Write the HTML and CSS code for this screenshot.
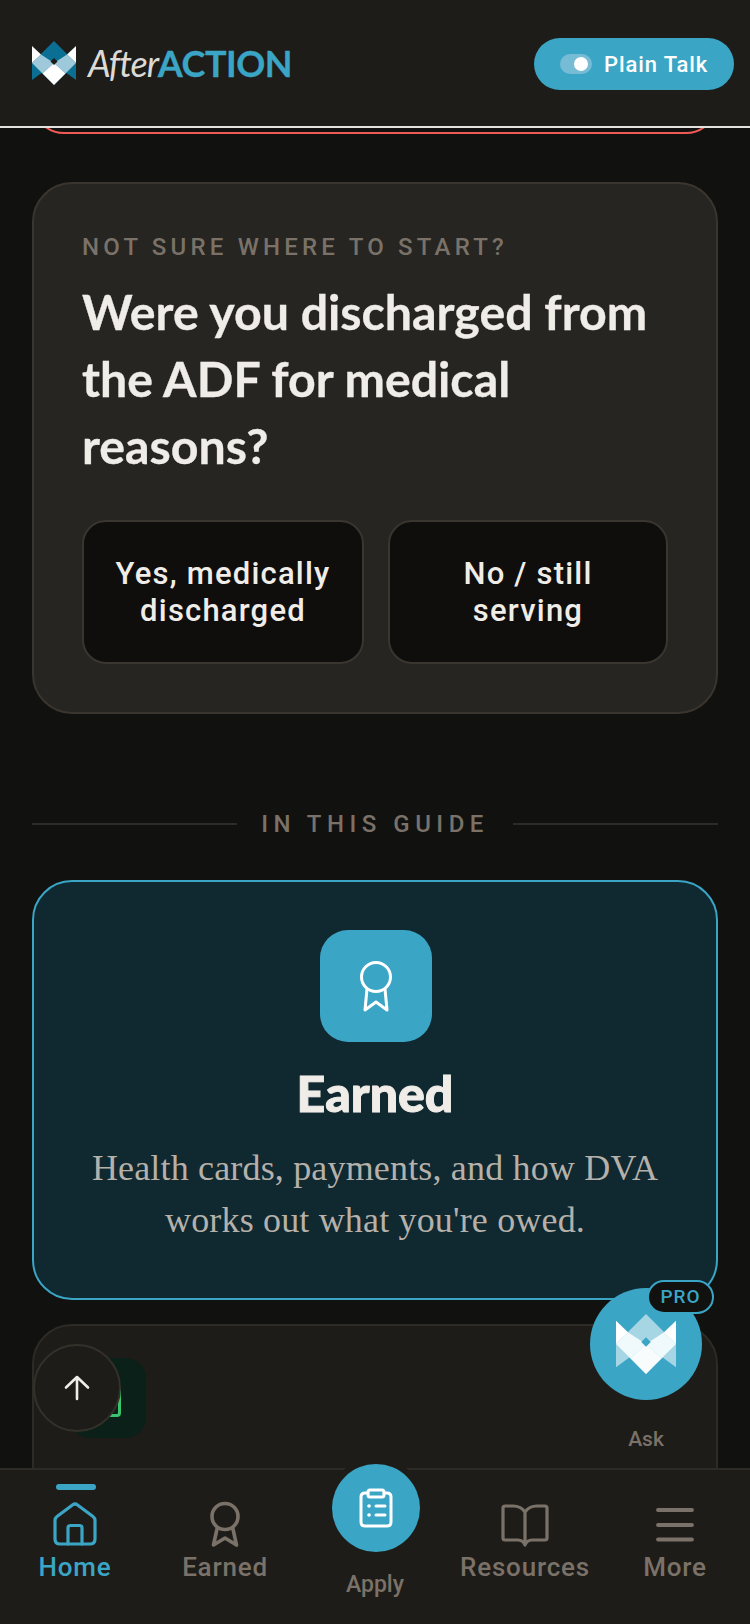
FILE: index.html
```html
<!DOCTYPE html>
<html lang="en">
<head>
<meta charset="utf-8">
<title>AfterAction</title>
<link rel="stylesheet" href="styles.css">
</head>
<body>
<div class="page">
  <header class="topbar">
    <div class="brand">
      <svg class="logo logo-header" viewBox="0 0 44 44" width="44" height="44">
        <polygon class="l-top" points="22,0 44,22 22,44 0,22"/>
        <polygon class="l-side" points="0,22 0,39 11,31"/>
        <polygon class="l-side" points="44,22 44,39 33,31"/>
        <polygon class="l-wedge" points="0,5 9,13.5 0,22"/>
        <polygon class="l-wedge" points="44,5 35,13.5 44,22"/>
        <polygon class="l-band" points="9,13.5 0,22 10.5,32.5 22,22"/>
        <polygon class="l-band" points="35,13.5 44,22 33.500,32.500 22,22"/>
        <polygon class="l-low" points="10.5,32.500 22,22 33.500,32.500 22,44"/>
        <polygon class="l-notch" points="22,17 25.500,20.500 22,24 18.500,20.500"/>
      </svg>
      <span class="wordmark"><span class="wm-after">After</span><span class="wm-action">ACTION</span></span>
    </div>
    <div class="plain-toggle">
      <span class="switch"><span class="knob"></span></span>
      <span class="plain-label">Plain Talk</span>
    </div>
  </header>
  <div class="header-line"></div>

  <main class="content">
    <div class="alert-card"></div>

    <section class="question-card">
      <p class="eyebrow">NOT SURE WHERE TO START?</p>
      <h2 class="question">Were you discharged from the ADF for medical reasons?</h2>
      <div class="answers">
        <button class="answer">Yes, medically discharged</button>
        <button class="answer">No / still serving</button>
      </div>
    </section>

    <div class="divider">
      <span class="divider-rule"></span>
      <span class="divider-text">IN THIS GUIDE</span>
      <span class="divider-rule"></span>
    </div>

    <section class="guide-card">
      <div class="guide-icon">
        <svg viewBox="0 0 36 52" width="36" height="52" fill="none" stroke="#fff" stroke-width="3" stroke-linecap="round" stroke-linejoin="round">
          <circle cx="18" cy="17" r="14.500"/>
          <path d="M9 29 L7 50 L18 42 L29 50 L27 29"/>
        </svg>
      </div>
      <h3 class="guide-title">Earned</h3>
      <p class="guide-text">Health cards, payments, and how DVA works out what you're owed.</p>
    </section>

    <section class="next-card">
      <div class="next-icon">
        <span class="next-glyph"></span>
      </div>
    </section>
  </main>

  <nav class="tabbar">
    <a class="tab tab-active">
      <span class="tab-marker"></span>
      <svg class="tab-svg" viewBox="0 0 44 44" fill="none" stroke="currentColor" stroke-width="3.200" stroke-linecap="round" stroke-linejoin="round">
        <path d="M19.800 2.800 Q22 1.200 24.200 2.800 L40 14.500 Q42 16 42 18.500 V37 Q42 42 37 42 H7 Q2 42 2 37 V18.500 Q2 16 4 14.500 Z"/>
        <path d="M15 42 V26 Q15 23.500 17.500 23.500 H26.500 Q29 23.500 29 26 V42"/>
      </svg>
      <span class="tab-label">Home</span>
    </a>
    <a class="tab">
      <svg class="tab-svg" viewBox="0 0 44 44" fill="none" stroke="currentColor" stroke-width="3.600" stroke-linecap="round" stroke-linejoin="round">
        <circle cx="22" cy="14.500" r="13"/>
        <path d="M14 27 L10.500 43 L22 36 L33.500 43 L30 27"/>
      </svg>
      <span class="tab-label">Earned</span>
    </a>
    <a class="tab tab-apply">
      <span class="apply-circle">
        <svg viewBox="0 0 34 40" width="34" height="40" fill="none" stroke="#fff" stroke-width="3" stroke-linecap="round" stroke-linejoin="round">
          <path d="M9 5 H6 Q2 5 2 9 V34 Q2 38 6 38 H28 Q32 38 32 34 V9 Q32 5 28 5 H25"/>
          <rect x="9" y="2" width="16" height="7" rx="2"/>
          <path d="M17 18 H26 M17 27 H26"/>
          <path d="M10 18 H10.100 M10 27 H10.100" stroke-width="3.600"/>
        </svg>
      </span>
      <span class="apply-label">Apply</span>
    </a>
    <a class="tab">
      <svg class="tab-svg tab-svg-wide" viewBox="0 -2 48 44" fill="none" stroke="currentColor" stroke-width="3.200" stroke-linecap="round" stroke-linejoin="round">
        <path d="M24 8 Q20 2 12 2 H4 Q2 2 2 4 V34 Q2 36 4 36 H17 Q22 36 24 41 Q26 36 31 36 H44 Q46 36 46 34 V4 Q46 2 44 2 H36 Q28 2 24 8 V41"/>
      </svg>
      <span class="tab-label">Resources</span>
    </a>
    <a class="tab">
      <svg class="tab-svg" viewBox="0 0 44 44" fill="none" stroke="currentColor" stroke-width="3.800" stroke-linecap="round">
        <path d="M5 8 H39 M5 23 H39 M5 37.500 H39"/>
      </svg>
      <span class="tab-label">More</span>
    </a>
  </nav>

  <button class="scroll-top" aria-label="Back to top">
    <svg viewBox="0 0 26 26" width="26" height="26" fill="none" stroke="#f0ede8" stroke-width="2.600" stroke-linecap="round" stroke-linejoin="round">
      <path d="M13 24 V2 M2 12.500 L13 2 L24 12.500"/>
    </svg>
  </button>

  <div class="ask">
    <div class="ask-circle">
      <svg class="logo logo-ask" viewBox="0 0 44 44" width="60" height="60">
        <polygon class="l-top" points="22,0 44,22 22,44 0,22"/>
        <polygon class="l-side" points="0,22 0,39 11,31"/>
        <polygon class="l-side" points="44,22 44,39 33,31"/>
        <polygon class="l-wedge" points="0,5 9,13.5 0,22"/>
        <polygon class="l-wedge" points="44,5 35,13.5 44,22"/>
        <polygon class="l-band" points="9,13.5 0,22 10.5,32.5 22,22"/>
        <polygon class="l-band" points="35,13.5 44,22 33.500,32.500 22,22"/>
        <polygon class="l-low" points="10.5,32.500 22,22 33.500,32.500 22,44"/>
        <polygon class="l-notch" points="22,17 25.500,20.500 22,24 18.500,20.500"/>
      </svg>
      <span class="pro-badge">PRO</span>
    </div>
    <span class="ask-label">Ask</span>
  </div>
</div>
</body>
</html>
```
FILE: styles.css
```css
* { box-sizing: border-box; }
html, body { margin: 0; padding: 0; background: #111110; }
body { width: 750px; height: 1624px; overflow: hidden; }

.page {
  position: relative;
  width: 750px;
  height: 1624px;
  display: flex;
  flex-direction: column;
  overflow: hidden;
  background: #111110;
  color: #f0ede8;
  font-family: Roboto, "Noto Sans", sans-serif;
}

.topbar {
  height: 126px;
  flex: none;
  background: #1e1c18;
  display: flex;
  align-items: center;
  justify-content: space-between;
  padding: 0 16px 0 32px;
}
.header-line { height: 2px; flex: none; background: #e5e1dd; }

.brand { display: flex; align-items: center; gap: 12px; }
.logo { display: block; flex: none; }
.logo-header .l-top { fill: #0b6e93; }
.logo-header .l-side { fill: #0b6e93; }
.logo-header .l-wedge { fill: #fff; }
.logo-header .l-band { fill: #9dc9da; }
.logo-header .l-low { fill: #fff; }
.logo-header .l-notch { fill: #1e1c18; }
.logo-ask .l-top { fill: #a6d5e4; }
.logo-ask .l-side { fill: #a6d5e4; }
.logo-ask .l-wedge { fill: #fff; }
.logo-ask .l-band { fill: #f0f9fb; }
.logo-ask .l-low { fill: #f8fcfd; }
.logo-ask .l-notch { fill: #3ba5c5; }

.wordmark { font-family: Lato, sans-serif; font-size: 36px; line-height: 40px; letter-spacing: -0.5px; display: flex; align-items: baseline; }
.wm-after { font-style: italic; font-weight: 400; color: #dcdad7; letter-spacing: -1.100px; }
.wm-action { font-weight: 700; color: #3ba5c5; -webkit-text-stroke: 0.3px #3ba5c5; }

.plain-toggle {
  width: 200px;
  height: 52px;
  border-radius: 26px;
  background: #3ba5c5;
  display: flex;
  align-items: center;
  gap: 12px;
  padding-left: 26px;
  margin-top: 1px;
}
.switch { width: 32px; height: 20px; border-radius: 10px; background: #75bcd4; display: flex; align-items: center; justify-content: flex-end; padding-right: 4px; }
.knob { width: 14px; height: 14px; border-radius: 50%; background: #fff; }
.plain-label { font-size: 22px; letter-spacing: 0.900px; line-height: 30px; margin-top: 2px; color: #fff; font-weight: 500; }

.content { flex: 1; min-height: 0; overflow: hidden; padding: 0 32px; }

.alert-card {
  height: 70px;
  margin-top: -64px;
  border: 2px solid #ee5a55;
  border-radius: 32px;
}

.question-card {
  margin-top: 48px;
  height: 532px;
  background: #262521;
  border: 2px solid #3a362f;
  border-radius: 40px;
  padding: 47px 48px 0;
}
.eyebrow { margin: 0; font-size: 24px; line-height: 32px; letter-spacing: 4.200px; color: #7a7268; font-weight: 500; }
.question { margin: 15px 0 0; font-family: Lato, sans-serif; font-size: 48.300px; line-height: 67.200px; font-weight: 700; color: #f0ede8; -webkit-text-stroke: 0.3px #f0ede8; }
.answers { display: grid; grid-template-columns: 282px 1fr; gap: 24px; margin-top: 40px; }
.answer {
  height: 144px;
  padding: 0 20px;
  background: #0f0e0d;
  border: 2px solid #3a362f;
  border-radius: 24px;
  color: #f0ede8;
  font-family: inherit;
  font-size: 31px;
  line-height: 37px;
  font-weight: 500;
  letter-spacing: 1.200px;
}

.divider { display: flex; align-items: center; gap: 24px; margin-top: 94px; height: 32px; }
.divider-rule { flex: 1; height: 2px; background: #2e2b26; }
.divider-text { font-size: 24px; letter-spacing: 5.500px; color: #7a7268; font-weight: 500; }

.guide-card {
  margin-top: 40px;
  height: 420px;
  background: #102830;
  border: 2px solid #3ba5c5;
  border-radius: 40px;
  padding: 48px 48px 0;
  display: flex;
  flex-direction: column;
  align-items: center;
  text-align: center;
}
.guide-icon { width: 112px; height: 112px; margin-left: 2px; border-radius: 28px; background: #3ba5c5; display: flex; align-items: center; justify-content: center; flex: none; }
.guide-title { margin: 17px 0 0; font-family: Lato, sans-serif; font-size: 50px; line-height: 68px; font-weight: 900; -webkit-text-stroke: 1px #f0ede8; color: #f0ede8; }
.guide-text { margin: 15px 0 0; font-family: "Liberation Serif", serif; font-size: 36px; line-height: 52px; letter-spacing: 0.170px; color: #b5b1aa; }

.next-card {
  margin-top: 24px;
  height: 220px;
  background: #1e1c18;
  border: 2px solid #2e2b26;
  border-radius: 40px;
  padding: 32px 36px;
}
.next-icon { width: 76px; height: 80px; border-radius: 20px; background: #0a2018; display: flex; align-items: flex-end; justify-content: flex-end; padding: 0 25px 21px 0; }
.next-glyph { width: 22px; height: 30px; border: 3px solid #3ac46e; border-radius: 4px; }

.tabbar {
  flex: none;
  position: relative;
  height: 156px;
  background: #1e1c18;
  border-top: 2px solid #2e2b26;
  display: grid;
  grid-template-columns: repeat(5, 150px);
}
.tab { display: flex; flex-direction: column; align-items: center; color: #7a7268; position: relative; padding-top: 32px; }
.tab-active { color: #3ba5c5; }
.tab-marker { position: absolute; top: 14px; left: 56px; width: 40px; height: 6px; border-radius: 3px; background: #3ba5c5; }
.tab-svg { width: 44px; height: 44px; display: block; flex: none; overflow: visible; }
.tab-svg-wide { width: 48px; }
.tab-label { font-size: 26px; line-height: 36px; margin-top: 3px; letter-spacing: 0.800px; white-space: nowrap; font-weight: 500; }

.tab-apply { padding-top: 0; }
.apply-circle { width: 88px; height: 88px; margin: -6px 0 0 2px; border-radius: 50%; background: #3ba5c5; box-shadow: 0 0 0 6px #1e1c18; display: flex; align-items: center; justify-content: center; flex: none; }
.apply-label { font-size: 23px; line-height: 30px; margin-top: 18px; font-weight: 500; }

.scroll-top {
  position: absolute;
  left: 33px;
  top: 1344px;
  width: 88px;
  height: 88px;
  border-radius: 50%;
  background: #1e1c18;
  border: 2px solid #34312b;
  padding: 0;
  display: flex;
  align-items: center;
  justify-content: center;
}

.ask { position: absolute; left: 590px; top: 1288px; width: 112px; display: flex; flex-direction: column; align-items: center; }
.ask-circle { position: relative; width: 112px; height: 112px; border-radius: 50%; background: #3ba5c5; display: flex; align-items: center; justify-content: center; }
.pro-badge {
  position: absolute;
  left: 57px;
  top: -8px;
  width: 67px;
  height: 34px;
  border-radius: 17px;
  background: #111110;
  border: 2px solid #3ba5c5;
  color: #3ba5c5;
  font-size: 19px;
  line-height: 30px;
  font-weight: 500;
  letter-spacing: 1px;
  text-align: center;
}
.ask-label { margin-top: 25px; font-size: 21px; line-height: 28px; color: #7a7268; font-weight: 500; }
```
